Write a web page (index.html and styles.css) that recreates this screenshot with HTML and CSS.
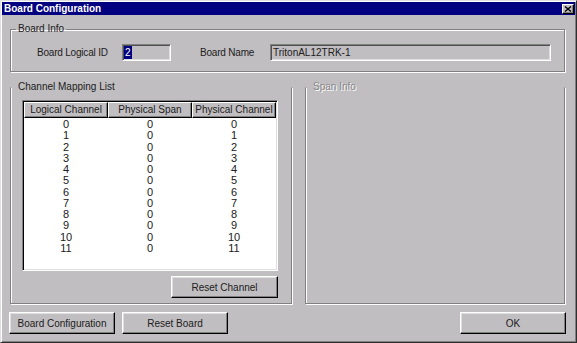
FILE: index.html
```html
<!DOCTYPE html>
<html>
<head>
<meta charset="utf-8">
<link rel="stylesheet" href="styles.css">
</head>
<body>
<div class="window">
  <div class="titlebar">
    <span class="title">Board Configuration</span>
    <span class="close"><svg width="8" height="6" viewBox="0 0 8 6"><path d="M1 0.5 L7 5.5 M7 0.5 L1 5.5" stroke="#000" stroke-width="1.4" fill="none"/></svg></span>
  </div>

  <fieldset class="group info">
    <legend>Board Info</legend>
    <div class="info-row">
      <span class="lbl lbl-id">Board Logical ID</span>
      <div class="field field-id"><span class="sel">2</span></div>
      <span class="lbl lbl-name">Board Name</span>
      <div class="field field-name">TritonAL12TRK-1</div>
    </div>
  </fieldset>

  <div class="lower">
    <fieldset class="group map">
      <legend>Channel Mapping List</legend>
      <div class="map-body">
        <div class="list">
          <div class="list-head">
            <div class="hcell">Logical Channel</div>
            <div class="hcell">Physical Span</div>
            <div class="hcell">Physical Channel</div>
          </div>
          <div class="rows">
            <div class="row"><span>0</span><span>0</span><span>0</span></div>
            <div class="row"><span>1</span><span>0</span><span>1</span></div>
            <div class="row"><span>2</span><span>0</span><span>2</span></div>
            <div class="row"><span>3</span><span>0</span><span>3</span></div>
            <div class="row"><span>4</span><span>0</span><span>4</span></div>
            <div class="row"><span>5</span><span>0</span><span>5</span></div>
            <div class="row"><span>6</span><span>0</span><span>6</span></div>
            <div class="row"><span>7</span><span>0</span><span>7</span></div>
            <div class="row"><span>8</span><span>0</span><span>8</span></div>
            <div class="row"><span>9</span><span>0</span><span>9</span></div>
            <div class="row"><span>10</span><span>0</span><span>10</span></div>
            <div class="row"><span>11</span><span>0</span><span>11</span></div>
          </div>
        </div>
        <div class="btn-row"><button class="btn">Reset Channel</button></div>
      </div>
    </fieldset>
    <fieldset class="group span">
      <legend class="disabled">Span Info</legend>
    </fieldset>
  </div>

  <div class="bottom">
    <button class="btn">Board Configuration</button>
    <button class="btn btn-reset">Reset Board</button>
    <span class="spacer"></span>
    <button class="btn btn-ok">OK</button>
  </div>
</div>
</body>
</html>
```
FILE: styles.css
```css
* { box-sizing: border-box; }
html, body { margin: 0; padding: 0; background: #c0bec1; }
body { font-family: "Liberation Sans", Arial, sans-serif; font-size: 10px; color: #000; }

.window {
  width: 577px;
  height: 343px;
  background: #c0bec1;
  border: 1px solid;
  border-color: #dfdfdf #303030 #303030 #dfdfdf;
  box-shadow: inset 1px 1px 0 #fff, inset -1px -1px 0 #808080;
  display: flex;
  flex-direction: column;
}

.titlebar {
  margin: 1px 1px 0 1px;
  height: 13px;
  background: #000080;
  display: flex;
  align-items: center;
  padding: 0 1px 0 2px;
}
.title {
  color: #fff;
  font-weight: bold;
  font-size: 10px;
  line-height: 13px;
  flex: 1;
}
.close {
  width: 12px;
  height: 10px;
  background: #c0bec1;
  border: 1px solid;
  border-color: #fff #000 #000 #fff;
  box-shadow: inset -1px -1px 0 #808080;
  display: flex;
  align-items: center;
  justify-content: center;
  margin-top: 1px;
}
.close svg { display: block; }

.group {
  margin: 0;
  padding: 0;
  min-width: 0;
  border: 1px solid #808080;
  box-shadow: 1px 1px 0 #fff, inset 1px 1px 0 #fff;
}
.group legend {
  margin-left: 5px;
  padding: 0 2px;
  font-size: 10px;
  line-height: 12px;
  color: #202020;
}
.group legend.disabled {
  color: #8a888b;
  text-shadow: 1px 1px 0 #fff;
}

.info {
  margin: 8px 11px 0 9px;
}
.info-row {
  display: flex;
  align-items: center;
  padding: 9px 0 10px 26px;
}
.lbl { white-space: nowrap; letter-spacing: -0.2px; color: #202020; }
.lbl-id { width: 85px; }
.lbl-name { width: 70px; margin-left: 29px; }

.field {
  height: 17px;
  border: 1px solid;
  border-color: #808080 #fff #fff #808080;
  box-shadow: inset 1px 1px 0 #505050, inset -1px -1px 0 #dfdfdf;
  background: #c0bec1;
  display: flex;
  align-items: center;
  padding-left: 2px;
  font-size: 10px;
  color: #202020;
}
.field-id { width: 49px; padding-left: 1px; }
.field-name { width: 281px; }
.sel {
  background: #000080;
  color: #fff;
  height: 13px;
  line-height: 13px;
  padding: 0 1px;
}

.lower {
  display: flex;
  gap: 13px;
  margin: 9px 11px 0 9px;
}
.lower .group {
  border-top-color: transparent;
  box-shadow: 1px 1px 0 #fff, inset 1px 0 0 #fff;
}
.map { width: 282px; }
.map-body { padding: 7px 13px 5px 11px; }
.span { flex: 1; }

.list {
  width: 256px;
  height: 171px;
  background: #fff;
  border: 1px solid;
  border-color: #808080 #fff #fff #808080;
  box-shadow: inset 1px 1px 0 #000, inset -1px -1px 0 #dfdfdf;
  padding: 1px;
}
.list-head {
  display: grid;
  grid-template-columns: 84px 84px 84px;
  height: 16px;
}
.hcell {
  background: #c0bec1;
  border: 1px solid;
  border-color: #fff #000 #000 #fff;
  box-shadow: inset -1px -1px 0 #808080;
  text-align: center;
  line-height: 13px;
  font-size: 10px;
  white-space: nowrap;
  color: #202020;
}
.rows { padding-top: 1px; }
.row {
  display: grid;
  grid-template-columns: 84px 84px 84px;
  height: 11.25px;
  line-height: 11.25px;
  font-size: 11px;
  text-align: center;
  color: #202020;
}

.btn-row {
  display: flex;
  justify-content: flex-end;
  margin-top: 5px;
}
.btn {
  font-family: "Liberation Sans", Arial, sans-serif;
  font-size: 10px;
  color: #202020;
  width: 106px;
  height: 22px;
  padding: 0;
  background: #c0bec1;
  border: 1px solid;
  border-color: #fff #000 #000 #fff;
  box-shadow: inset -1px -1px 0 #808080, inset 1px 1px 0 #dfdfdf;
  border-radius: 0;
}
.btn-row .btn { width: 107px; }

.bottom {
  display: flex;
  margin: 8px 10px 0 8px;
}
.btn-reset { margin-left: 7px; }
.spacer { flex: 1; }
.btn-ok { width: 106px; }
```
